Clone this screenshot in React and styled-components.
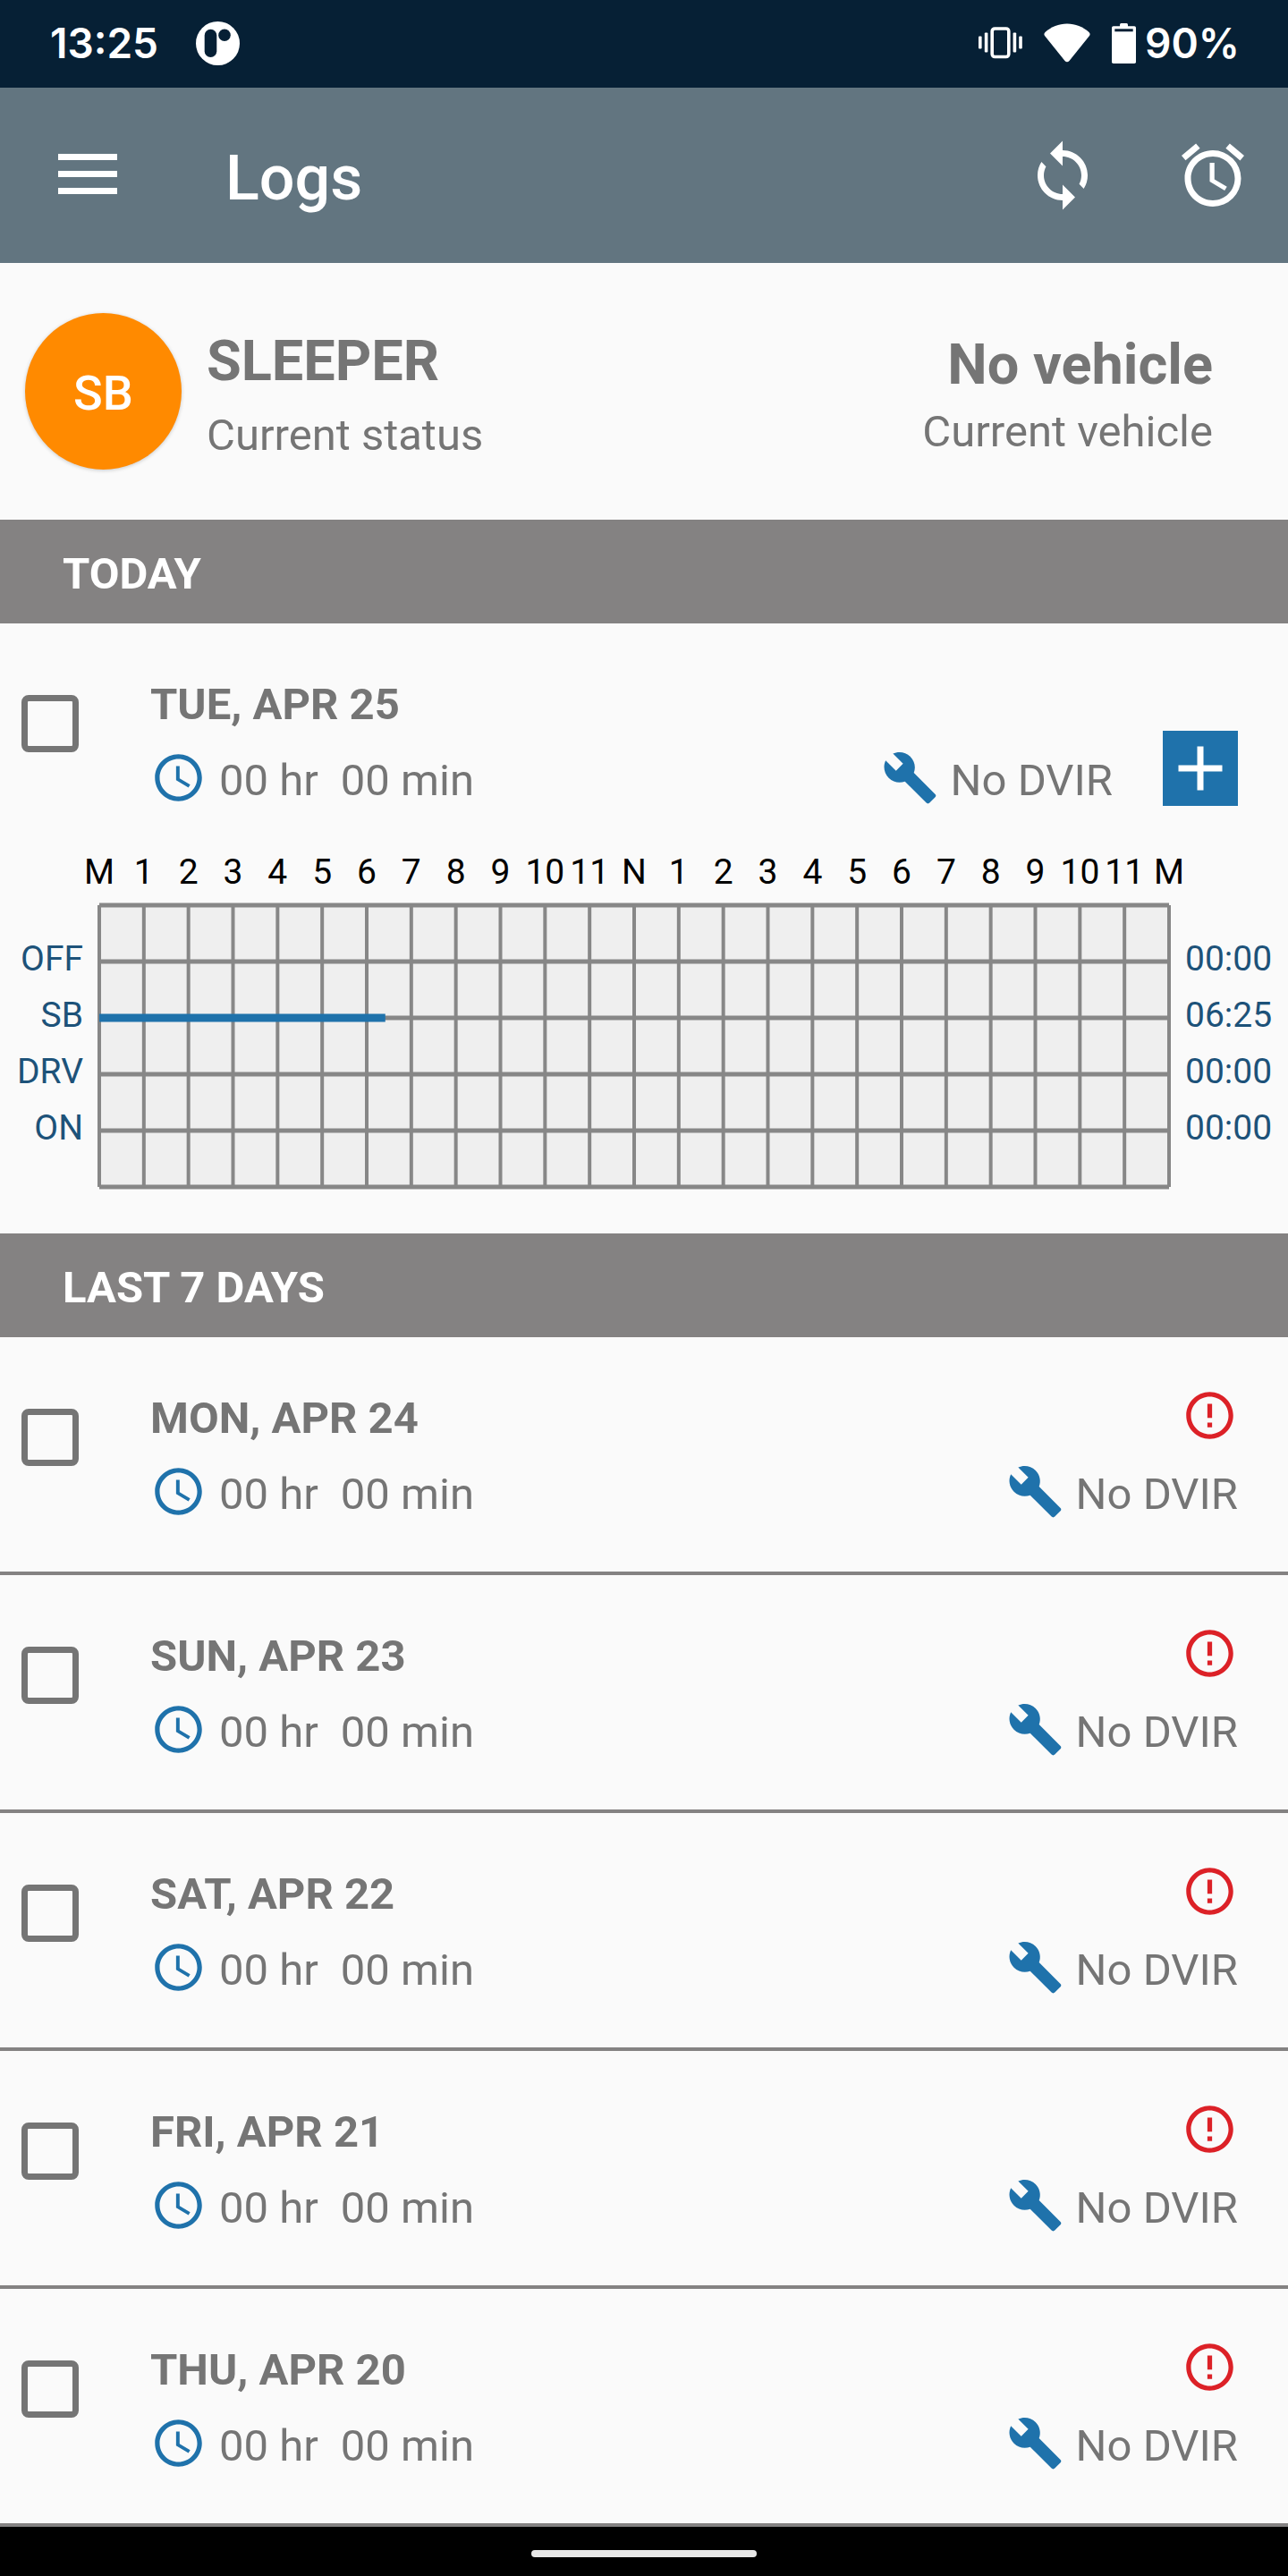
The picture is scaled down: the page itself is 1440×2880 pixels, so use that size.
import styled, { createGlobalStyle } from "styled-components";
import {
  MdAccessTime,
  MdAdd,
  MdAlarm,
  MdBuild,
  MdErrorOutline,
  MdSync,
} from "react-icons/md";

const GlobalStyle = createGlobalStyle`
  * {
    box-sizing: border-box;
  }

  body {
    margin: 0;
    background: #fafafa;
    color: #757575;
    font-family: Roboto, "Liberation Sans", sans-serif;
    font-size: 49px;
    line-height: 57px;
  }

  h1, h2, h3, p, ul {
    margin: 0;
    padding: 0;
  }

  svg {
    display: block;
    flex-shrink: 0;
  }
`;

const Screen = styled.div`
  display: flex;
  flex-direction: column;
  min-height: 100vh;
`;

const StatusBar = styled.div`
  display: flex;
  align-items: center;
  height: 98px;
  padding: 0 54px 2px 56px;
  background: #062035;
  color: #fff;
  font-family: Inter, Roboto, sans-serif;
  font-size: 46px;
  font-weight: 600;
`;

const Clock = styled.span`
  margin-right: 42px;
`;

const SystemIcons = styled.div`
  display: flex;
  align-items: center;
  gap: 24px;
  margin-left: auto;
`;

const Battery = styled.div`
  display: flex;
  align-items: center;
  gap: 10px;
`;

const AppBar = styled.header`
  display: flex;
  align-items: center;
  height: 196px;
  padding: 0 42px 0 56px;
  background: #627580;
  color: #fff;
`;

const IconButton = styled.button`
  display: flex;
  align-items: center;
  justify-content: center;
  width: 84px;
  height: 84px;
  padding: 0;
  border: 0;
  background: none;
  color: inherit;
`;

const AppTitle = styled.h1`
  flex: 1;
  margin-left: 112px;
  padding-top: 6px;
  font-size: 70px;
  font-weight: 500;
  line-height: 84px;
`;

const Actions = styled.div`
  display: flex;
  gap: 84px;
`;

const StatusPanel = styled.section`
  display: flex;
  align-items: center;
  gap: 28px;
  padding: 56px 84px 56px 28px;
`;

const Avatar = styled.div`
  display: flex;
  align-items: center;
  justify-content: center;
  width: 175px;
  height: 175px;
  padding-top: 4px;
  border-radius: 50%;
  background: #ff8a00;
  box-shadow: 0 1px 4px rgba(0, 0, 0, 0.2);
  color: #fff;
  font-size: 54px;
  font-weight: 500;
`;

const StatusText = styled.div`
  display: flex;
  flex-direction: column;
  gap: ${(props) => props.$gap}px;
  margin-left: ${(props) => (props.$end ? "auto" : "0")};
  padding-top: 7px;
  text-align: ${(props) => (props.$end ? "right" : "left")};
`;

const StatusName = styled.h2`
  font-size: 63px;
  line-height: 74px;
`;

const SectionTitle = styled.h2`
  padding: 32px 70px 27px;
  background: #848282;
  color: #fff;
  font-size: 49px;
`;

const Row = styled.div`
  display: flex;
  padding: 56px 56px ${(props) => (props.$today ? 51 : 58)}px 24px;
`;

const LogList = styled.ul`
  list-style: none;
`;

const LogItem = styled.li`
  border-bottom: 4px solid #848282;
`;

const Checkbox = styled.input`
  flex-shrink: 0;
  appearance: none;
  width: 64px;
  height: 64px;
  margin: 24px 80px 0 0;
  border: 7px solid #757575;
  border-radius: 8px;

  &:checked {
    background: #757575;
  }
`;

const RowColumn = styled.div`
  display: flex;
  flex-direction: column;
  align-items: ${(props) => (props.$end ? "flex-end" : "flex-start")};
  justify-content: flex-end;
  gap: 22px;
  margin-left: ${(props) => (props.$end ? "auto" : "0")};
`;

const DateText = styled.h3`
  padding-top: 6px;
  font-size: 49px;
`;

const Detail = styled.div`
  display: flex;
  gap: 14px;
`;

const DetailText = styled.p`
  display: flex;
  gap: 25px;
  padding-top: 6px;
  white-space: nowrap;
`;

const BlueIcon = styled.span`
  color: #1f72ab;
`;

const AlertIcon = styled.span`
  color: #dc2127;
`;

const AddButton = styled.button`
  display: flex;
  align-self: flex-end;
  margin-left: 56px;
  padding: 0;
  border: 0;
  background: #1f72ab;
  color: #fff;
`;

const Chart = styled.div`
  padding-bottom: 52px;
  font-size: 39px;
  line-height: 46px;
`;

const Hours = styled.div`
  display: grid;
  grid-template-columns: repeat(25, 1fr);
  padding: 0 108px 14px 86px;
  color: #000;
  text-align: center;
`;

const Plot = styled.div`
  display: grid;
  grid-template-columns: 93px 1fr 115px;
  gap: 18px;
`;

const PlotLabels = styled.div`
  padding-top: 29px;
  color: #1d5279;
  line-height: 63px;
  text-align: ${(props) => props.$align};
`;

const Graph = styled.svg`
  width: 100%;
  height: 315px;
  overflow: visible;
`;

const NavBar = styled.div`
  flex: 1;
  padding: 26px 0 21px;
  background: #000;
`;

const NavHandle = styled.div`
  width: 252px;
  height: 8px;
  margin: 0 auto;
  border-radius: 4px;
  background: #e8e8e8;
`;

const hours = [
  "M", 1, 2, 3, 4, 5, 6, 7, 8, 9, 10, 11,
  "N", 1, 2, 3, 4, 5, 6, 7, 8, 9, 10, 11, "M",
];

const duties = [
  { name: "OFF", total: "00:00" },
  { name: "SB", total: "06:25" },
  { name: "DRV", total: "00:00" },
  { name: "ON", total: "00:00" },
];

// row is the grid line of the duty, from and to are hours of the day
const segments = [{ row: 2, from: 0, to: 6 + 25 / 60 }];

const lastDays = [
  "MON, APR 24",
  "SUN, APR 23",
  "SAT, APR 22",
  "FRI, APR 21",
  "THU, APR 20",
];

const NotificationIcon = () => (
  <svg width="49" height="49" viewBox="0 0 49 49">
    <circle cx="24.5" cy="24.5" r="24.5" fill="#fff" />
    <rect x="9.7" y="8.7" width="13.6" height="31.3" rx="6.8" fill="#062035" />
    <circle cx="32" cy="15.3" r="6.8" fill="#062035" />
  </svg>
);

const VibrateIcon = () => (
  <svg width="49" height="36" viewBox="0 0 49 36" fill="#fff">
    <rect x="0" y="10.5" width="3.6" height="14" rx="1" />
    <rect x="6.8" y="6.5" width="3.6" height="22" rx="1" />
    <rect
      x="15.2"
      y="2"
      width="18.6"
      height="31.5"
      rx="3"
      fill="none"
      stroke="#fff"
      strokeWidth="3.6"
    />
    <rect x="38.6" y="6.5" width="3.6" height="22" rx="1" />
    <rect x="45.2" y="10.5" width="3.6" height="14" rx="1" />
  </svg>
);

const WifiIcon = () => (
  <svg width="52" height="44" viewBox="0 0 52 44" fill="#fff">
    <path d="M1.5 10C8.5 4 16.5 0.5 26 0.5S43.5 4 50.5 10Q52.5 12 51 14L28.5 42Q26 44.5 23.5 42L1 14Q-0.5 12 1.5 10z" />
  </svg>
);

const BatteryIcon = () => (
  <svg width="27" height="45" viewBox="0 0 27 45" fill="#fff">
    <rect x="9" y="0" width="9" height="6" rx="1.5" />
    <rect x="0" y="3.3" width="27" height="41.7" rx="1.8" />
    <rect x="3.3" y="6.3" width="20.4" height="3" fill="#062035" />
  </svg>
);

const MenuIcon = () => (
  <svg width="66" height="48" viewBox="0 0 66 48" fill="#fff">
    <rect width="66" height="7" />
    <rect y="19" width="66" height="7" />
    <rect y="38" width="66" height="7" />
  </svg>
);

const LogRow = ({ date, today }) => (
  <Row $today={today}>
    <Checkbox type="checkbox" aria-label={`Select ${date}`} />
    <RowColumn>
      <DateText>{date}</DateText>
      <Detail>
        <BlueIcon>
          <MdAccessTime size={63} />
        </BlueIcon>
        <DetailText>
          <span>00 hr</span>
          <span>00 min</span>
        </DetailText>
      </Detail>
    </RowColumn>
    <RowColumn $end>
      {!today && (
        <AlertIcon>
          <MdErrorOutline size={63} />
        </AlertIcon>
      )}
      <Detail>
        <BlueIcon>
          <MdBuild size={63} />
        </BlueIcon>
        <DetailText>No DVIR</DetailText>
      </Detail>
    </RowColumn>
    {today && (
      <AddButton aria-label="Add">
        <MdAdd size={84} />
      </AddButton>
    )}
  </Row>
);

const DutyChart = () => (
  <Chart>
    <Hours>
      {hours.map((hour, index) => (
        <span key={index}>{hour}</span>
      ))}
    </Hours>
    <Plot>
      <PlotLabels $align="right">
        {duties.map((duty) => (
          <div key={duty.name}>{duty.name}</div>
        ))}
      </PlotLabels>
      <Graph viewBox="0 0 24 5" preserveAspectRatio="none">
        <rect width="24" height="5" fill="#efefef" />
        <g stroke="#878787" strokeWidth="4">
          {hours.map((_, x) => (
            <line key={x} x1={x} x2={x} y1="0" y2="5" vectorEffect="non-scaling-stroke" />
          ))}
        </g>
        <g stroke="#878787" strokeWidth="5">
          {[0, 1, 2, 3, 4, 5].map((y) => (
            <line key={y} x1="0" x2="24" y1={y} y2={y} vectorEffect="non-scaling-stroke" />
          ))}
        </g>
        {segments.map((segment) => (
          <line
            key={segment.from}
            x1={segment.from}
            x2={segment.to}
            y1={segment.row}
            y2={segment.row}
            stroke="#1f72ab"
            strokeWidth="9"
            vectorEffect="non-scaling-stroke"
          />
        ))}
      </Graph>
      <PlotLabels $align="left">
        {duties.map((duty) => (
          <div key={duty.name}>{duty.total}</div>
        ))}
      </PlotLabels>
    </Plot>
  </Chart>
);

const App = () => {
  return (
    <Screen>
      <GlobalStyle />
      <StatusBar>
        <Clock>13:25</Clock>
        <NotificationIcon />
        <SystemIcons>
          <VibrateIcon />
          <WifiIcon />
          <Battery>
            <BatteryIcon />
            <span>90%</span>
          </Battery>
        </SystemIcons>
      </StatusBar>
      <AppBar>
        <IconButton aria-label="Menu">
          <MenuIcon />
        </IconButton>
        <AppTitle>Logs</AppTitle>
        <Actions>
          <IconButton aria-label="Sync">
            <MdSync size={84} />
          </IconButton>
          <IconButton aria-label="Alarm">
            <MdAlarm size={84} />
          </IconButton>
        </Actions>
      </AppBar>
      <StatusPanel>
        <Avatar>SB</Avatar>
        <StatusText $gap={17}>
          <StatusName>SLEEPER</StatusName>
          <p>Current status</p>
        </StatusText>
        <StatusText $gap={9} $end>
          <StatusName>No vehicle</StatusName>
          <p>Current vehicle</p>
        </StatusText>
      </StatusPanel>
      <SectionTitle>TODAY</SectionTitle>
      <LogRow date="TUE, APR 25" today />
      <DutyChart />
      <SectionTitle>LAST 7 DAYS</SectionTitle>
      <LogList>
        {lastDays.map((date) => (
          <LogItem key={date}>
            <LogRow date={date} />
          </LogItem>
        ))}
      </LogList>
      <NavBar>
        <NavHandle />
      </NavBar>
    </Screen>
  );
};

export default App;
